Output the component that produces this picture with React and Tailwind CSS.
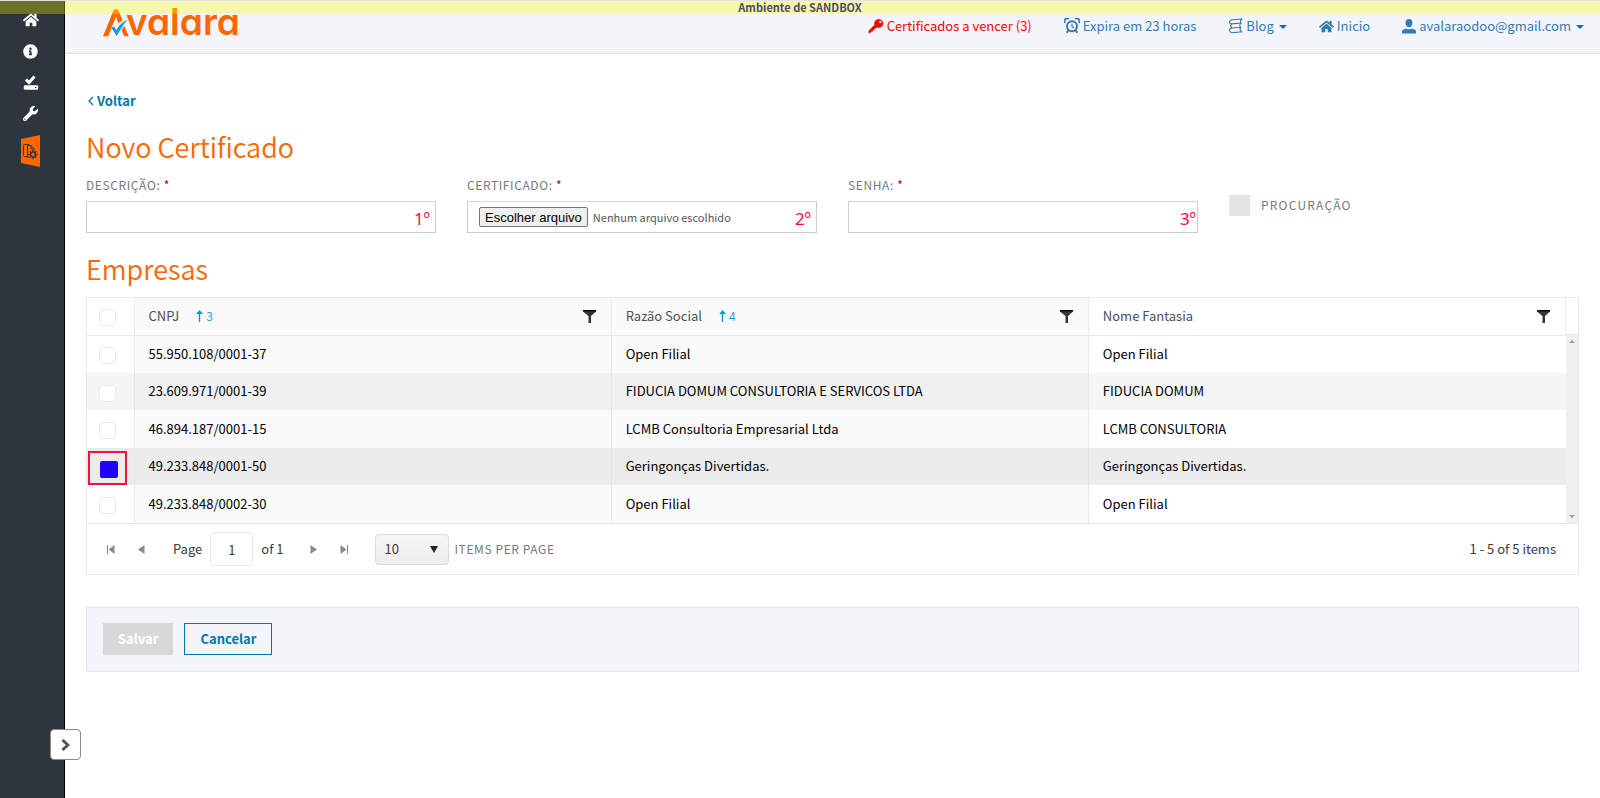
import React from 'react';
import { FaHome, FaInfoCircle, FaWrench } from 'react-icons/fa';

const navClass = 'flex items-center gap-[3px] text-[#337ab7]';

const companies = [
    { cnpj: '55.950.108/0001-37', name: 'Open Filial', alias: 'Open Filial' },
    { cnpj: '23.609.971/0001-39', name: 'FIDUCIA DOMUM CONSULTORIA E SERVICOS LTDA', alias: 'FIDUCIA DOMUM' },
    { cnpj: '46.894.187/0001-15', name: 'LCMB Consultoria Empresarial Ltda', alias: 'LCMB CONSULTORIA' },
    { cnpj: '49.233.848/0001-50', name: 'Geringonças Divertidas.', alias: 'Geringonças Divertidas.', selected: true },
    { cnpj: '49.233.848/0002-30', name: 'Open Filial', alias: 'Open Filial' },
];

const columns = [
    { title: 'CNPJ', order: '3', locked: true },
    { title: 'Razão Social', order: '4', locked: true },
    { title: 'Nome Fantasia' },
];

const SavedIcon = () => (
    <svg className="w-4 h-4" viewBox="0 0 16 16" fill="none" stroke="#fff">
        <path d="M3 4.500 6 7.500l5.500-6" strokeWidth="3" />
        <rect x="1.500" y="11" width="13" height="3" rx=".6" strokeWidth="1.400" fill="#fff" />
        <path d="M12 12.500h1.400" stroke="#2f353d" strokeWidth="1" />
    </svg>
);

const CertificateIcon = () => (
    <svg className="w-[19px] h-8" viewBox="0 0 19 32">
        <path d="M0 4 19 0v32L0 28z" fill="#ff6600" />
        <g fill="none" stroke="#2f353d" strokeWidth="1">
            <path d="M6 21.500H3.500a1 1 0 0 1-1-1v-10a1 1 0 0 1 1-1H8" />
            <path d="M8 22.500H6.500V10.500H10l3 3v2" />
            <path d="M10 10.500v3.500h3" />
            <circle cx="12" cy="19.500" r="2.500" strokeWidth="1.600" />
            <path d="M12 14.800v2M12 22.200v2M7.300 19.500h2M14.700 19.500h2M8.700 16.200l1.400 1.400M13.900 21.400l1.400 1.400M8.700 22.800l1.400-1.400M13.900 17.600l1.400-1.400" strokeWidth="1.300" />
        </g>
    </svg>
);

const KeyIcon = () => (
    <svg className="w-4 h-4" viewBox="0 0 16 16" fill="currentColor">
        <path fillRule="evenodd" d="M10.800 1a4.400 4.400 0 1 1-1.600 8.500L7.800 10.300 7 10.200l-.4 1.500-1.500.2-.4 1.500-1.600.3L2.500 15H.5v-2.300l6-6A4.400 4.400 0 0 1 10.800 1zm1.500 1.800a1.200 1.200 0 1 0 .1 2.400 1.200 1.200 0 0 0-.1-2.400z" />
    </svg>
);

const AlarmIcon = () => (
    <svg className="w-4 h-4" viewBox="0 0 16 16" fill="none" stroke="currentColor" strokeWidth="2">
        <circle cx="8" cy="8.300" r="5" />
        <path d="M8 5.500v3l2 1.500" strokeWidth="1.200" />
        <path d="M1.200 4.800A2.600 2.600 0 0 1 5 1.200M14.800 4.800A2.600 2.600 0 0 0 11 1.200" strokeWidth="1.800" />
        <path d="M4.300 12.500 2.800 14.800M11.700 12.500l1.500 2.300" />
    </svg>
);

const BlogIcon = () => (
    <svg className="w-[15px] h-4" viewBox="0 0 15 16" fill="none" stroke="currentColor" strokeWidth="1.100">
        <path d="M14.200 1 4.500 1.800C.8 2.200.5 5.600 3.500 5.900L13 5c-1-1.200-.8-2.800 1.200-4z" />
        <path d="M3.500 5.900c-1 1.200-1 2.800.3 4.100l8.700-.8c-1.100-1.200-.9-3 .5-4.200" />
        <path d="M3.800 10C.8 10.400.8 14.200 4 14.800l9.600-.9c-1.400-1.200-1.700-3.300-1.100-4.700" />
    </svg>
);

const UserIcon = () => (
    <svg className="w-[14px] h-[15px]" viewBox="0 0 14 15" fill="currentColor">
        <path d="M7 0c2.200 0 3.500 1.500 3.500 3.700C10.500 6.200 9 8.200 7 8.200S3.500 6.200 3.500 3.700C3.500 1.500 4.800 0 7 0z" />
        <path d="M0 14.500v-1.800c0-1 .6-1.700 1.500-2.100l2.800-1.200C5 10 6 10.300 7 10.300S9 10 9.700 9.400l2.800 1.200c.9.400 1.500 1.100 1.500 2.100v1.800z" />
    </svg>
);

const Caret = () => (
    <svg className="w-2 h-1 ml-[2px] mt-[2px]" viewBox="0 0 8 4" fill="#0a6fb0">
        <path d="M0 0h8L4 4z" />
    </svg>
);

const FilterIcon = () => (
    <svg className="w-[13px] h-[13px]" viewBox="0 0 13 13">
        <path d="M0 0h13v1.500L8 6v7H5.500V6L0 1.500z" fill="#33363a" />
        <path d="M0 0h13v1.300H0z" fill="#000" />
    </svg>
);

const SortArrow = () => (
    <svg className="w-[7px] h-3" viewBox="0 0 7 12" fill="#0d97d5">
        <path d="M3.500 0 7 4H4.200v8H2.800V4H0z" />
    </svg>
);

const Logo = () => (
    <a href="#" aria-label="Avalara" className="flex h-[38px] text-[#ff6600]">
        <svg className="w-7 h-[38px]" viewBox="0 0 28 38" fill="none">
            <path d="M1 36.300 11.300 11q.8-2 2.700-2t2.700 2l3.800 9-4.200 3.500L14 16.500 6.200 36.300z" fill="#ff6600" />
            <path d="M19.500 30 22.300 26 26.800 36.300h-4.600z" fill="#ff6600" />
            <path d="M9.300 27.500 12 26.500 14.300 30C16.500 26 20 22.300 25.500 19.500 21.500 24.500 18.500 29.500 14.600 36z" fill="#1a9ad6" />
        </svg>
        <span className="-ml-[4px] font-['Inter',sans-serif] text-[37px] leading-[44px] font-semibold [font-feature-settings:'cv11']">valara</span>
    </a>
);

const PagerButton = ({ label, children, className }) => (
    <button type="button" aria-label={label} className={`w-[31px] h-8 flex items-center justify-center ${className || ''}`}>
        <svg className="w-[9px] h-[9px]" viewBox="0 0 9 9" fill="#8b8b8b">{children}</svg>
    </button>
);

const Field = ({ id, label, mark, markClass, children }) => (
    <div>
        <label htmlFor={id} className="block h-[22px] text-[12px] leading-[21px] tracking-wider text-[#76797e]">
            {label} <span className="text-[#b00000]">*</span>
        </label>
        <div className="relative mt-[5px]">
            {children}
            <span className={`absolute top-2 font-['Noto_Sans',sans-serif] text-[17px] leading-5 text-[#fb0a3c] ${markClass}`}>{mark}</span>
        </div>
    </div>
);

const inputClass = 'block w-full h-8 border border-[#ccc] border-t-[#d6d6d6] bg-white px-3 text-[13px] outline-none';
const checkClass = 'block appearance-none w-[17px] h-[17px] mt-[3px] rounded-[4px] border border-[#ebebeb] bg-white';

const Sidebar = () => (
    <nav className="relative w-[65px] shrink-0 bg-[#2f353d] border-r border-black text-white">
        <div className="flex flex-col items-center pt-3 pr-[3px]">
            <a href="#" aria-label="Início" className="h-[31px]"><FaHome className="w-4 h-4" /></a>
            <a href="#" aria-label="Informações" className="h-[31px] pt-px"><FaInfoCircle className="w-[15px] h-[15px]" /></a>
            <a href="#" aria-label="Salvos" className="h-[31px] pt-px"><SavedIcon /></a>
            <a href="#" aria-label="Configurações" className="h-[30px] pt-px"><FaWrench className="w-[15px] h-[15px]" /></a>
            <a href="#" aria-label="Certificados"><CertificateIcon /></a>
        </div>
        <button type="button" aria-label="Expandir menu" className="absolute bottom-[38px] -right-[17px] z-10 w-[31px] h-[31px] flex items-center justify-center rounded-[4px] border border-[#8b8b8b] bg-white">
            <svg className="w-[10px] h-3" viewBox="0 0 10 12" fill="none" stroke="#55575c" strokeWidth="3">
                <path d="M1.500 1 6.800 6 1.500 11" />
            </svg>
        </button>
    </nav>
);

const Header = () => (
    <header className="flex h-[54px] items-start justify-between border-b border-[#e2e2e4] bg-[#f4f5fa] pl-[37px] pr-4">
        <Logo />
        <div className="flex h-[52px] items-center gap-8 text-[13px] leading-5">
            <a href="#" className="flex items-center gap-[3px] text-[#ff0000]"><KeyIcon />Certificados a vencer (3)</a>
            <a href="#" className={navClass}><AlarmIcon />Expira em 23 horas</a>
            <a href="#" className={navClass}><BlogIcon />Blog<Caret /></a>
            <a href="#" className={navClass}><FaHome className="w-[15px] h-[15px]" />Inicio</a>
            <a href="#" className={navClass}><UserIcon />avalaraodoo@gmail.com<Caret /></a>
        </div>
    </header>
);

const CompanyTable = () => (
    <div className="flex">
        <table className="flex-1 table-fixed border-collapse w-full text-left text-[13px] leading-5">
            <colgroup>
                <col className="w-[47px]" />
                <col />
                <col />
                <col />
            </colgroup>
            <thead>
                <tr className="h-[37px] border-b border-[#e8e8e8]">
                    <th className="pl-3 border-r border-[#ececec]"><input type="checkbox" aria-label="Selecionar todas" className={checkClass} /></th>
                    {columns.map((column) => (
                        <th key={column.title} className={`pl-[14px] pr-[15px] font-normal text-[#4c4f54] border-r border-[#ececec] ${column.locked ? 'bg-[#fafafa]' : ''}`}>
                            <div className="flex items-center">
                                {column.title}
                                {column.order && (
                                    <span className="flex items-center gap-[3px] ml-[17px] text-[12px] text-[#2a9fd6]"><SortArrow />{column.order}</span>
                                )}
                                <button type="button" aria-label={`Filtrar ${column.title}`} className="ml-auto pt-px"><FilterIcon /></button>
                            </div>
                        </th>
                    ))}
                </tr>
            </thead>
            <tbody className="text-black">
                {companies.map((company) => {
                    const locked = company.selected ? 'pl-[14px] pb-px border-r border-[#e4e4e4]' : 'pl-[14px] pb-px border-r border-[#e8e8e8] bg-black/2';
                    return (
                        <tr key={company.cnpj} className={`odd:h-[38px] even:h-[37px] ${company.selected ? 'bg-[#ececec]' : 'even:bg-[#f5f5f5]'}`}>
                            <td className="relative pl-3 border-r border-[#e8e8e8]">
                                <input
                                    type="checkbox"
                                    aria-label={`Selecionar ${company.cnpj}`}
                                    defaultChecked={company.selected}
                                    className={company.selected ? 'block appearance-none w-[18px] h-[17px] mt-[5px] ml-px rounded-[2px] bg-[#2000ff]' : checkClass}
                                />
                                {company.selected && <span className="absolute left-px top-[3px] w-[39px] h-[34px] border-2 border-[#f4103f]" />}
                            </td>
                            <td className={locked}>{company.cnpj}</td>
                            <td className={locked}>{company.name}</td>
                            <td className="pl-[14px] pb-px">{company.alias}</td>
                        </tr>
                    );
                })}
            </tbody>
        </table>
        <div className="w-3 shrink-0 flex flex-col">
            <div className="h-[37px] border-b border-[#e8e8e8]" />
            <div className="flex-1 flex flex-col items-center justify-between bg-[#f0f0f0] py-[5px]">
                <svg className="w-[6px] h-[3px]" viewBox="0 0 6 3" fill="#9a9a9a"><path d="M3 0l3 3H0z" /></svg>
                <svg className="w-[6px] h-[3px]" viewBox="0 0 6 3" fill="#9a9a9a"><path d="M0 0h6L3 3z" /></svg>
            </div>
        </div>
    </div>
);

const Pager = () => (
    <div className="flex h-[51px] items-center border-t border-[#e8e8e8] pl-2 pr-[22px] text-[13px] leading-5 text-[#3a3c40]">
        <PagerButton label="Primeira página"><path d="M1 0h1v9H1zM8.500 0v9L2.500 4.500z" /></PagerButton>
        <PagerButton label="Página anterior"><path d="M7.500 0v9L1 4.500z" /></PagerButton>
        <label htmlFor="page" className="ml-4">Page</label>
        <input id="page" defaultValue="1" className="w-[43px] h-[34px] mx-2 rounded-[4px] border border-[#e8e8e8] text-center outline-none" />
        of 1
        <PagerButton label="Próxima página" className="ml-[14px]"><path d="M1.500 0v9L8 4.500z" /></PagerButton>
        <PagerButton label="Última página"><path d="M7 0h1v9H7zM.500 0v9l6-4.500z" /></PagerButton>
        <div className="relative ml-[15px] mr-[6px]">
            <select id="size" defaultValue="10" className="block appearance-none w-[74px] h-[31px] rounded-[4px] border border-[#dcdcdc] bg-linear-to-b from-[#f5f5f5] to-[#eeeeee] pl-[9px] leading-5 outline-none">
                <option>10</option>
                <option>20</option>
            </select>
            <svg className="absolute right-[11px] top-3 w-2 h-[7px] pointer-events-none" viewBox="0 0 8 7" fill="#222"><path d="M0 0h8L4 7z" /></svg>
        </div>
        <label htmlFor="size" className="text-[12px] tracking-wider text-[#76797e]">ITEMS PER PAGE</label>
        <span className="ml-auto">1 - 5 of 5 items</span>
    </div>
);

const App = () => {
    return (
        <div className="relative flex min-h-screen bg-white font-['Noto_Sans_CJK_JP','Noto_Sans_CJK_SC',sans-serif]">
            <Sidebar />
            <div className="flex-1 min-w-0">
                <Header />
                <main className="px-[21px] pt-[37px]">
                    <div className="flex h-9 items-start">
                        <a href="#" className="flex h-5 items-center gap-[3px] pl-px text-[13px] leading-5 font-bold text-[#0077a6]">
                            <svg className="w-[7px] h-[10px]" viewBox="0 0 7 10" fill="none" stroke="currentColor" strokeWidth="1.300"><path d="M6 1 2 5l4 4" /></svg>
                            Voltar
                        </a>
                    </div>
                    <h1 className="h-10 text-[27px] leading-10 font-[350] text-[#ff6600]">Novo Certificado</h1>
                    <form className="mt-[7px] grid grid-cols-4 gap-x-[31px]">
                        <Field id="description" label="DESCRIÇÃO:" mark="1º" markClass="right-[6px]">
                            <input id="description" type="text" className={inputClass} />
                        </Field>
                        <Field id="certificate" label="CERTIFICADO:" mark="2º" markClass="right-[6px]">
                            <div className="flex items-center h-8 border border-[#ccc] border-t-[#d6d6d6] pl-[11px]">
                                <input id="certificate" type="file" className="sr-only" />
                                <label htmlFor="certificate" className="h-5 px-[5px] rounded-[2px] border border-[#767676] bg-[#efefef] font-['Liberation_Sans',sans-serif] text-[13px] leading-[19px] text-black">Escolher arquivo</label>
                                <span className="ml-[5px] text-[11px] leading-5 text-[#55575c]">Nenhum arquivo escolhido</span>
                            </div>
                        </Field>
                        <Field id="password" label="SENHA:" mark="3º" markClass="right-[2px]">
                            <input id="password" type="password" className={inputClass} />
                        </Field>
                        <div className="flex items-center gap-[11px] h-[22px] mt-5">
                            <input id="proxy" type="checkbox" className="appearance-none w-[21px] h-[21px] bg-[#e5e5e5]" />
                            <label htmlFor="proxy" className="text-[12px] leading-5 tracking-widest text-[#76797e]">PROCURAÇÃO</label>
                        </div>
                    </form>
                    <h2 className="mt-4 h-10 text-[27px] leading-10 font-[350] text-[#ff6600]">Empresas</h2>
                    <section className="mt-2 border border-[#e8e8e8]">
                        <CompanyTable />
                        <Pager />
                    </section>
                    <div className="mt-8 flex gap-[11px] border border-[#e4e5e8] bg-[#f4f5fa] px-4 pt-[15px] pb-4 text-[13px] leading-5 font-bold">
                        <button type="button" disabled className="h-8 px-[15px] bg-[#d8d8d8] text-white">Salvar</button>
                        <button type="button" className="h-8 px-[15px] border border-[#0077a6] text-[#0077a6]">Cancelar</button>
                    </div>
                </main>
            </div>
            <div className="absolute inset-x-0 top-0 h-[14px] border-t border-[#e3e3e3] bg-[#ffff00]/30 text-center text-[11px] leading-3 font-bold text-[#4c4f54]">Ambiente de SANDBOX</div>
        </div>
    );
};

export default App;
